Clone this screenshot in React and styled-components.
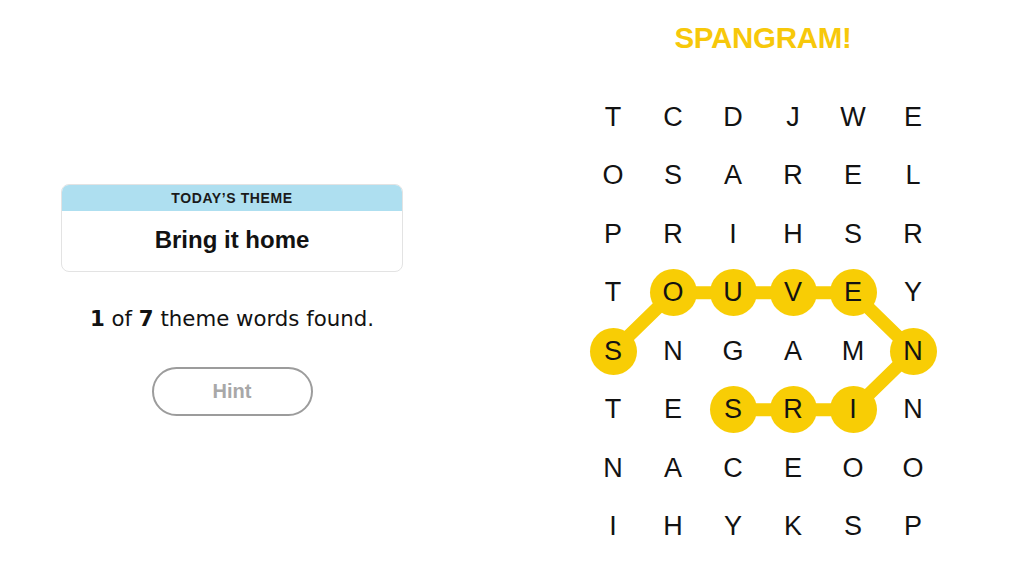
import React from "react";
import styled, { createGlobalStyle } from "styled-components";

const GlobalStyle = createGlobalStyle`
  html, body { margin: 0; padding: 0; background: #fff; }
  body { font-family: "Liberation Sans", Arial, sans-serif; color: #121212; }
`;

const YELLOW = "#f8cd05";
const COL_W = 60;
const ROW_H = 58.5;

const Page = styled.div`
  width: 1024px;
  height: 576px;
  display: flex;
  overflow: hidden;
`;

const LeftPanel = styled.section`
  width: 464px;
  display: flex;
  flex-direction: column;
  align-items: center;
  padding-top: 184px;
  box-sizing: border-box;
`;

const ThemeCard = styled.div`
  width: 342px;
  border: 1px solid #e3e3e3;
  border-radius: 8px;
  overflow: hidden;
  box-sizing: border-box;
`;

const ThemeHeader = styled.div`
  height: 26px;
  background: #aedff0;
  display: flex;
  align-items: center;
  justify-content: center;
  font-family: "Liberation Sans", Arial, sans-serif;
  font-weight: 700;
  font-size: 14px;
  letter-spacing: 0.6px;
  color: #1a1a1a;
`;

const ThemeBody = styled.div`
  height: 60px;
  display: flex;
  align-items: center;
  justify-content: center;
  font-family: "Liberation Sans", Arial, sans-serif;
  font-weight: 700;
  font-size: 24px;
  color: #121212;
  padding-bottom: 2px;
  box-sizing: border-box;
`;

const Status = styled.p`
  margin: 35px 0 0;
  font-family: "DejaVu Sans", sans-serif;
  font-size: 21.3px;
  line-height: 24px;
  color: #121212;
  b { font-weight: 700; }
`;

const HintButton = styled.button`
  margin-top: 36px;
  width: 161px;
  height: 49px;
  border: 2px solid #9c9c9c;
  border-radius: 25px;
  background: #fff;
  font-family: "Liberation Sans", Arial, sans-serif;
  font-weight: 700;
  font-size: 20px;
  color: #a8a8a8;
  cursor: pointer;
`;

const RightPanel = styled.section`
  margin-left: 119px;
  width: 360px;
  display: flex;
  flex-direction: column;
  align-items: center;
  padding-top: 21px;
  box-sizing: border-box;
`;

const Title = styled.h1`
  margin: 0;
  font-family: "Liberation Sans", Arial, sans-serif;
  font-weight: 700;
  font-size: 29.5px;
  line-height: 34px;
  letter-spacing: -0.3px;
  color: #f7c80a;
`;

const Board = styled.div`
  position: relative;
  margin-top: 33px;
  width: ${COL_W * 6}px;
  display: grid;
  grid-template-columns: repeat(6, ${COL_W}px);
  grid-auto-rows: ${ROW_H}px;
`;

const Connectors = styled.svg`
  position: absolute;
  inset: 0;
  width: 100%;
  height: 100%;
  z-index: 0;
  pointer-events: none;
`;

const Cell = styled.div`
  position: relative;
  z-index: 1;
  display: flex;
  align-items: center;
  justify-content: center;
`;

const Letter = styled.span`
  width: 47px;
  height: 47px;
  border-radius: 50%;
  display: flex;
  align-items: center;
  justify-content: center;
  background: ${(p) => (p.$selected ? YELLOW : "transparent")};
  font-family: "Liberation Sans", Arial, sans-serif;
  font-size: 27px;
  color: #121212;
`;

const rows = [
  "TCDJWE",
  "OSAREL",
  "PRIHSR",
  "TOUVEY",
  "SNGAMN",
  "TESRIN",
  "NACEOO",
  "IHYKSP",
];

const path = [
  [0, 4],
  [1, 3],
  [2, 3],
  [3, 3],
  [4, 3],
  [5, 4],
  [4, 5],
  [3, 5],
  [2, 5],
];

const selected = new Set(path.map(([c, r]) => `${c},${r}`));
const pts = path
  .map(([c, r]) => `${COL_W / 2 + c * COL_W},${ROW_H / 2 + r * ROW_H}`)
  .join(" ");

export default function App() {
  return (
    <>
      <GlobalStyle />
      <Page>
        <LeftPanel>
          <ThemeCard>
            <ThemeHeader>TODAY’S THEME</ThemeHeader>
            <ThemeBody>Bring it home</ThemeBody>
          </ThemeCard>
          <Status>
            <b>1</b> of <b>7</b> theme words found.
          </Status>
          <HintButton>Hint</HintButton>
        </LeftPanel>
        <RightPanel>
          <Title>SPANGRAM!</Title>
          <Board>
            <Connectors viewBox={`0 0 ${COL_W * 6} ${ROW_H * 8}`}>
              <polyline
                points={pts}
                fill="none"
                stroke={YELLOW}
                strokeWidth="13"
                strokeLinejoin="round"
                strokeLinecap="round"
              />
            </Connectors>
            {rows.map((row, r) =>
              row.split("").map((ch, c) => (
                <Cell key={`${r}-${c}`}>
                  <Letter $selected={selected.has(`${c},${r}`)}>{ch}</Letter>
                </Cell>
              ))
            )}
          </Board>
        </RightPanel>
      </Page>
    </>
  );
}
